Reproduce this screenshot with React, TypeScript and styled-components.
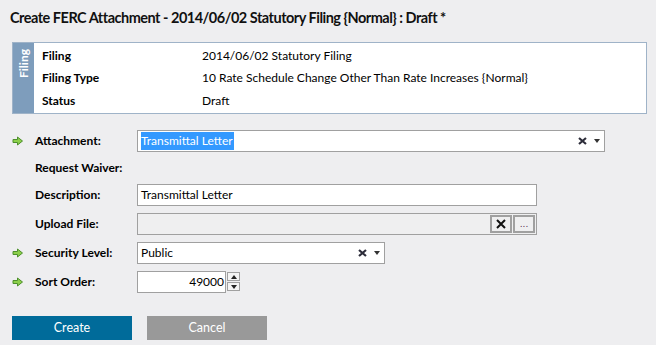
import { FC, Fragment } from 'react';
import styled, { createGlobalStyle } from 'styled-components';

const GlobalStyle = createGlobalStyle`
  html, body {
    margin: 0;
    padding: 0;
    background: #eeeef0;
  }
  body {
    font-family: Lato, "Liberation Sans", sans-serif;
    font-size: 12px;
    color: #000;
  }
`;

const Root = styled.div`
  width: 656px;
  height: 345px;
  padding: 8px 0 0 10px;
  box-sizing: border-box;
`;

const Title = styled.h1`
  margin: 0;
  font-size: 14.5px;
  font-weight: 700;
  letter-spacing: -0.5px;
  line-height: 20px;
  color: #111;
`;

const Panel = styled.div`
  display: flex;
  margin: 14px 9px 0 2px;
  border: 1px solid #9fb3c8;
  background: #fff;
`;

const Strip = styled.div`
  width: 21px;
  background: #7e9dbc;
  display: flex;
  align-items: flex-start;
  justify-content: center;
`;

const StripText = styled.span`
  writing-mode: vertical-rl;
  transform: rotate(180deg);
  color: #fff;
  font-weight: 700;
  font-size: 12px;
  padding-bottom: 6px;
`;

const InfoGrid = styled.div`
  flex: 1;
  display: grid;
  grid-template-columns: 160px 1fr;
  grid-auto-rows: 22.5px;
  align-items: center;
  padding: 1px 0 1px 8px;
`;

const InfoLabel = styled.div`
  font-weight: 700;
`;

const InfoValue = styled.div``;

const Form = styled.div`
  display: grid;
  grid-template-columns: 23px 102px 1fr;
  row-gap: 7px;
  align-items: center;
  margin: 16px 0 0 2px;
`;

const Label = styled.div`
  font-weight: 700;
  line-height: 18px;
`;

const Field = styled.div<{ $width: number }>`
  width: ${p => p.$width}px;
  height: 22px;
  box-sizing: border-box;
  border: 1px solid #a0a0a0;
  background: #fff;
  display: flex;
  align-items: center;
  padding: 0 4px 0 3px;
`;

const DisabledField = styled(Field)`
  background: #efeff0;
  padding: 0 1px 0 3px;
  justify-content: flex-end;
  gap: 1px;
`;

const Selected = styled.span`
  background: #3399ff;
  color: #fff;
  padding: 1px 1px 2px 0;
`;

const FieldText = styled.span`
  flex: 1;
`;

const Clear = styled.svg`
  margin-right: 7px;
`;

const Caret = styled.span`
  width: 0;
  height: 0;
  border-left: 3px solid transparent;
  border-right: 3px solid transparent;
  border-top: 4px solid #333;
`;

const SmallBtn = styled.button`
  width: 22px;
  height: 18px;
  box-sizing: border-box;
  border: 2px solid #a0a0a0;
  background: #efeff0;
  padding: 0;
  display: flex;
  align-items: center;
  justify-content: center;
  font-family: "DejaVu Sans", sans-serif;
  font-size: 9px;
  line-height: 18px;
  color: #5a3050;
`;

const Spin = styled.div`
  display: flex;
  align-items: center;
`;

const SpinInput = styled(Field)`
  justify-content: flex-end;
  padding-right: 1px;
`;

const Spinner = styled.div`
  display: flex;
  flex-direction: column;
  gap: 1px;
  margin-left: 1px;
`;

const SpinBtn = styled.div`
  width: 13px;
  height: 9px;
  box-sizing: border-box;
  border: 1px solid #a0a0a0;
  background: #f4f4f4;
  display: flex;
  align-items: center;
  justify-content: center;
`;

const Buttons = styled.div`
  display: flex;
  gap: 15px;
  margin: 23px 0 0 2px;
`;

const Button = styled.button<{ $primary?: boolean }>`
  width: 120px;
  height: 24px;
  border: none;
  background: ${p => (p.$primary ? '#006b9a' : '#999999')};
  color: #fff;
  font-family: Lato, "Liberation Sans", sans-serif;
  font-size: 12.5px;
`;

const Arrow: FC = () => (
  <svg width="12" height="10" viewBox="0 0 12 10">
    <path d="M1 3.5H5.5V1L10.5 5L5.5 9V6.5H1Z" fill="#8ccf4a" stroke="#4d8f2c" strokeWidth="1" />
  </svg>
);

const ClearIcon: FC = () => (
  <Clear width="9" height="8" viewBox="0 0 9 8">
    <path d="M1 1L8 7M8 1L1 7" stroke="#2d2d3a" strokeWidth="2.2" />
  </Clear>
);

const Tri: FC<{ up?: boolean }> = ({ up }) => (
  <svg width="6" height="4" viewBox="0 0 6 4">
    <path d={up ? 'M0 4L3 0L6 4Z' : 'M0 0L3 4L6 0Z'} fill="#222" />
  </svg>
);

const info = [
  ['Filing', '2014/06/02 Statutory Filing'],
  ['Filing Type', '10 Rate Schedule Change Other Than Rate Increases {Normal}'],
  ['Status', 'Draft'],
];

const App: FC = () => {
  return (
    <Root>
      <GlobalStyle />
      <Title>Create FERC Attachment - 2014/06/02 Statutory Filing {'{Normal}'} : Draft *</Title>

      {/* Filing summary */}
      <Panel>
        <Strip>
          <StripText>Filing</StripText>
        </Strip>
        <InfoGrid>
          {info.map(([k, v]) => (
            <Fragment key={k}>
              <InfoLabel>{k}</InfoLabel>
              <InfoValue>{v}</InfoValue>
            </Fragment>
          ))}
        </InfoGrid>
      </Panel>

      {/* Form fields */}
      <Form>
        <Arrow />
        <Label>Attachment:</Label>
        <Field $width={468}>
          <FieldText>
            <Selected>Transmittal Letter</Selected>
          </FieldText>
          <ClearIcon />
          <Caret />
        </Field>

        <span />
        <Label>Request Waiver:</Label>
        <span />

        <span />
        <Label>Description:</Label>
        <Field $width={400}>
          <FieldText>Transmittal Letter</FieldText>
        </Field>

        <span />
        <Label>Upload File:</Label>
        <DisabledField $width={400}>
          <SmallBtn>
            <svg width="10" height="10" viewBox="0 0 10 10">
              <path d="M1 1L9 9M9 1L1 9" stroke="#111" strokeWidth="2" />
            </svg>
          </SmallBtn>
          <SmallBtn>...</SmallBtn>
        </DisabledField>

        <Arrow />
        <Label>Security Level:</Label>
        <Field $width={248}>
          <FieldText>Public</FieldText>
          <ClearIcon />
          <Caret />
        </Field>

        <Arrow />
        <Label>Sort Order:</Label>
        <Spin>
          <SpinInput $width={89}>49000</SpinInput>
          <Spinner>
            <SpinBtn>
              <Tri up />
            </SpinBtn>
            <SpinBtn>
              <Tri />
            </SpinBtn>
          </Spinner>
        </Spin>
      </Form>

      <Buttons>
        <Button $primary>Create</Button>
        <Button>Cancel</Button>
      </Buttons>
    </Root>
  );
};

export default App;
